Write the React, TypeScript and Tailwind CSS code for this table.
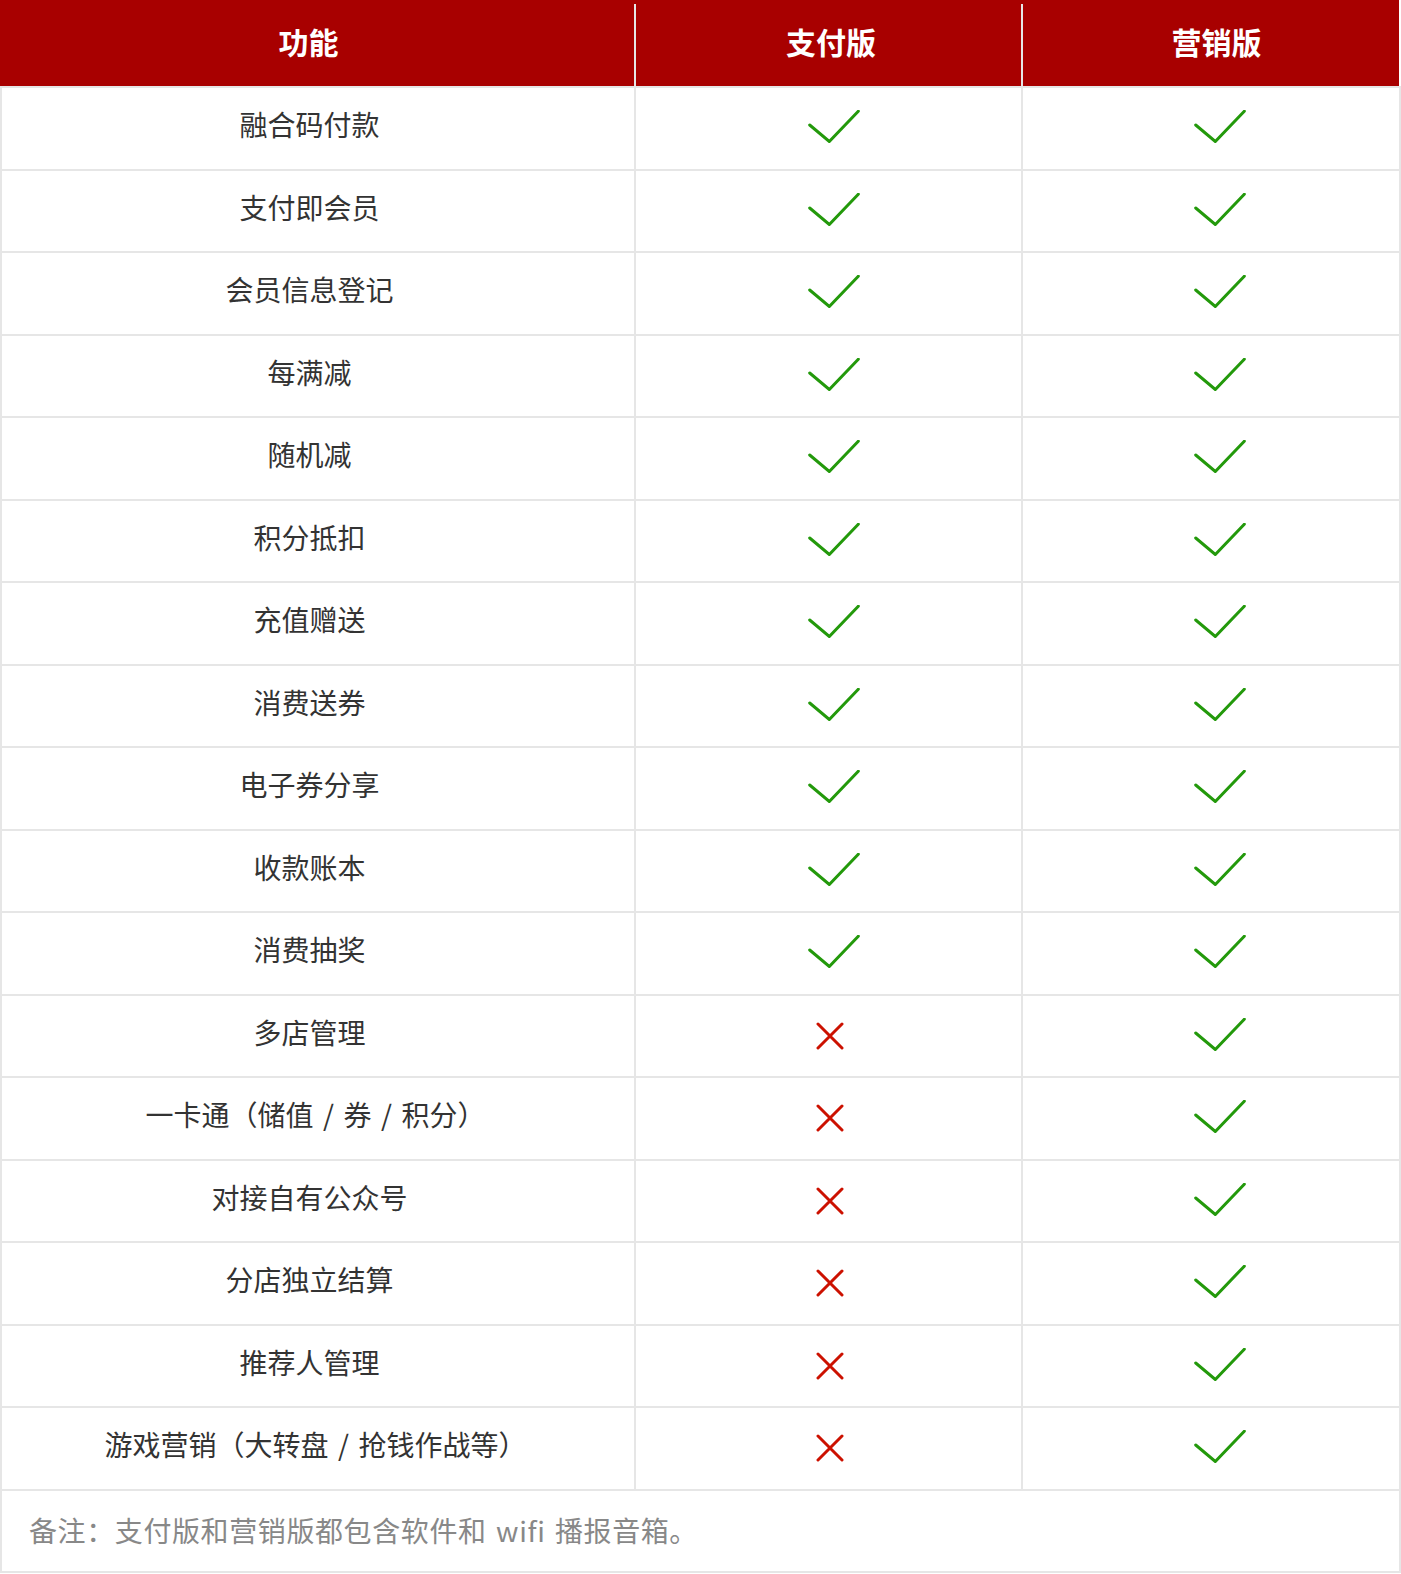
import React from "react";

const rows: { name: string; pay: boolean; mkt: boolean }[] = [
  { name: "融合码付款", pay: true, mkt: true },
  { name: "支付即会员", pay: true, mkt: true },
  { name: "会员信息登记", pay: true, mkt: true },
  { name: "每满减", pay: true, mkt: true },
  { name: "随机减", pay: true, mkt: true },
  { name: "积分抵扣", pay: true, mkt: true },
  { name: "充值赠送", pay: true, mkt: true },
  { name: "消费送券", pay: true, mkt: true },
  { name: "电子券分享", pay: true, mkt: true },
  { name: "收款账本", pay: true, mkt: true },
  { name: "消费抽奖", pay: true, mkt: true },
  { name: "多店管理", pay: false, mkt: true },
  { name: "一卡通（储值 / 券 / 积分）", pay: false, mkt: true },
  { name: "对接自有公众号", pay: false, mkt: true },
  { name: "分店独立结算", pay: false, mkt: true },
  { name: "推荐人管理", pay: false, mkt: true },
  { name: "游戏营销（大转盘 / 抢钱作战等）", pay: false, mkt: true },
];

function WithSpaces({ text }: { text: string }) {
  let body = text;
  let tail: string | null = null;
  if (body.endsWith("）")) {
    tail = "）";
    body = body.slice(0, -1);
  }
  const parts = body.split(" ");
  return (
    <>
      {parts.map((p, i) => (
        <React.Fragment key={i}>
          {i > 0 && <span className="inline-block w-[9.5px]">{"\u00a0"}</span>}
          {p}
        </React.Fragment>
      ))}
      {tail && <span className="inline-block w-[16px] overflow-visible">{tail}</span>}
    </>
  );
}

function Check({ shift }: { shift: string }) {
  return (
    <svg width="52" height="33" viewBox="0 0 52 33" className={shift}>
      <polyline
        points="1.7,15 21.3,31.5 50.3,1.2"
        fill="none"
        stroke="#23990b"
        strokeWidth="3"
        strokeLinecap="round"
        strokeLinejoin="miter"
      />
    </svg>
  );
}

function Cross() {
  return (
    <svg width="28" height="28" viewBox="0 0 28 28" className="ml-[2px]">
      <path d="M2 2 L26 26 M26 2 L2 26" fill="none" stroke="#cc1100" strokeWidth="3" strokeLinecap="round" />
    </svg>
  );
}

export default function App() {
  return (
    <div
      className="w-[1401px] bg-white"
      style={{ fontFamily: '"Noto Sans CJK SC", "Noto Sans", sans-serif' }}
    >
      {/* Header */}
      <div className="flex h-[86px] w-[1399px] bg-[#a80000] text-white text-[30px] font-bold">
        <div className="w-[634px] flex items-center justify-center pr-[17px] pb-[4px]">功能</div>
        <div className="w-[2px] mt-[4px] bg-[#e6e6e6]" />
        <div className="w-[385px] flex items-center justify-center pl-[5px] pb-[4px]">支付版</div>
        <div className="w-[2px] mt-[4px] bg-[#e6e6e6]" />
        <div className="flex-1 flex items-center justify-center pl-[11px] pb-[4px]">营销版</div>
      </div>
      <div className="h-[2px] bg-[#e6e6e6]" />
      {/* Rows */}
      {rows.map((r) => (
        <div key={r.name} className="flex h-[82.5px] border-b-2 border-[#e6e6e6]">
          <div className="w-[2px] bg-[#e6e6e6]" />
          <div className="w-[632px] flex items-center justify-center pr-[17px] pb-[8px] text-[28px] text-[#333333] whitespace-nowrap">
            <span>
              <WithSpaces text={r.name} />
            </span>
          </div>
          <div className="w-[2px] bg-[#e6e6e6]" />
          <div className="w-[385px] flex items-center justify-center">
            {r.pay ? <Check shift="ml-[10px] mb-[3px]" /> : <Cross />}
          </div>
          <div className="w-[2px] bg-[#e6e6e6]" />
          <div className="w-[376px] flex items-center justify-center">
            {r.mkt ? <Check shift="ml-[18px] mb-[3px]" /> : <Cross />}
          </div>
          <div className="w-[2px] bg-[#e6e6e6]" />
        </div>
      ))}
      {/* Footer */}
      <div className="flex h-[82px] border-b-2 border-[#e6e6e6]">
        <div className="w-[2px] bg-[#e6e6e6]" />
        <div className="flex-1 flex items-center pl-[27px] pb-[2px] text-[28px] tracking-[0.6px] text-[#888888] whitespace-nowrap">
          <span>
            <WithSpaces text="备注：支付版和营销版都包含软件和 wifi 播报音箱。" />
          </span>
        </div>
        <div className="w-[2px] bg-[#e6e6e6]" />
      </div>
    </div>
  );
}
